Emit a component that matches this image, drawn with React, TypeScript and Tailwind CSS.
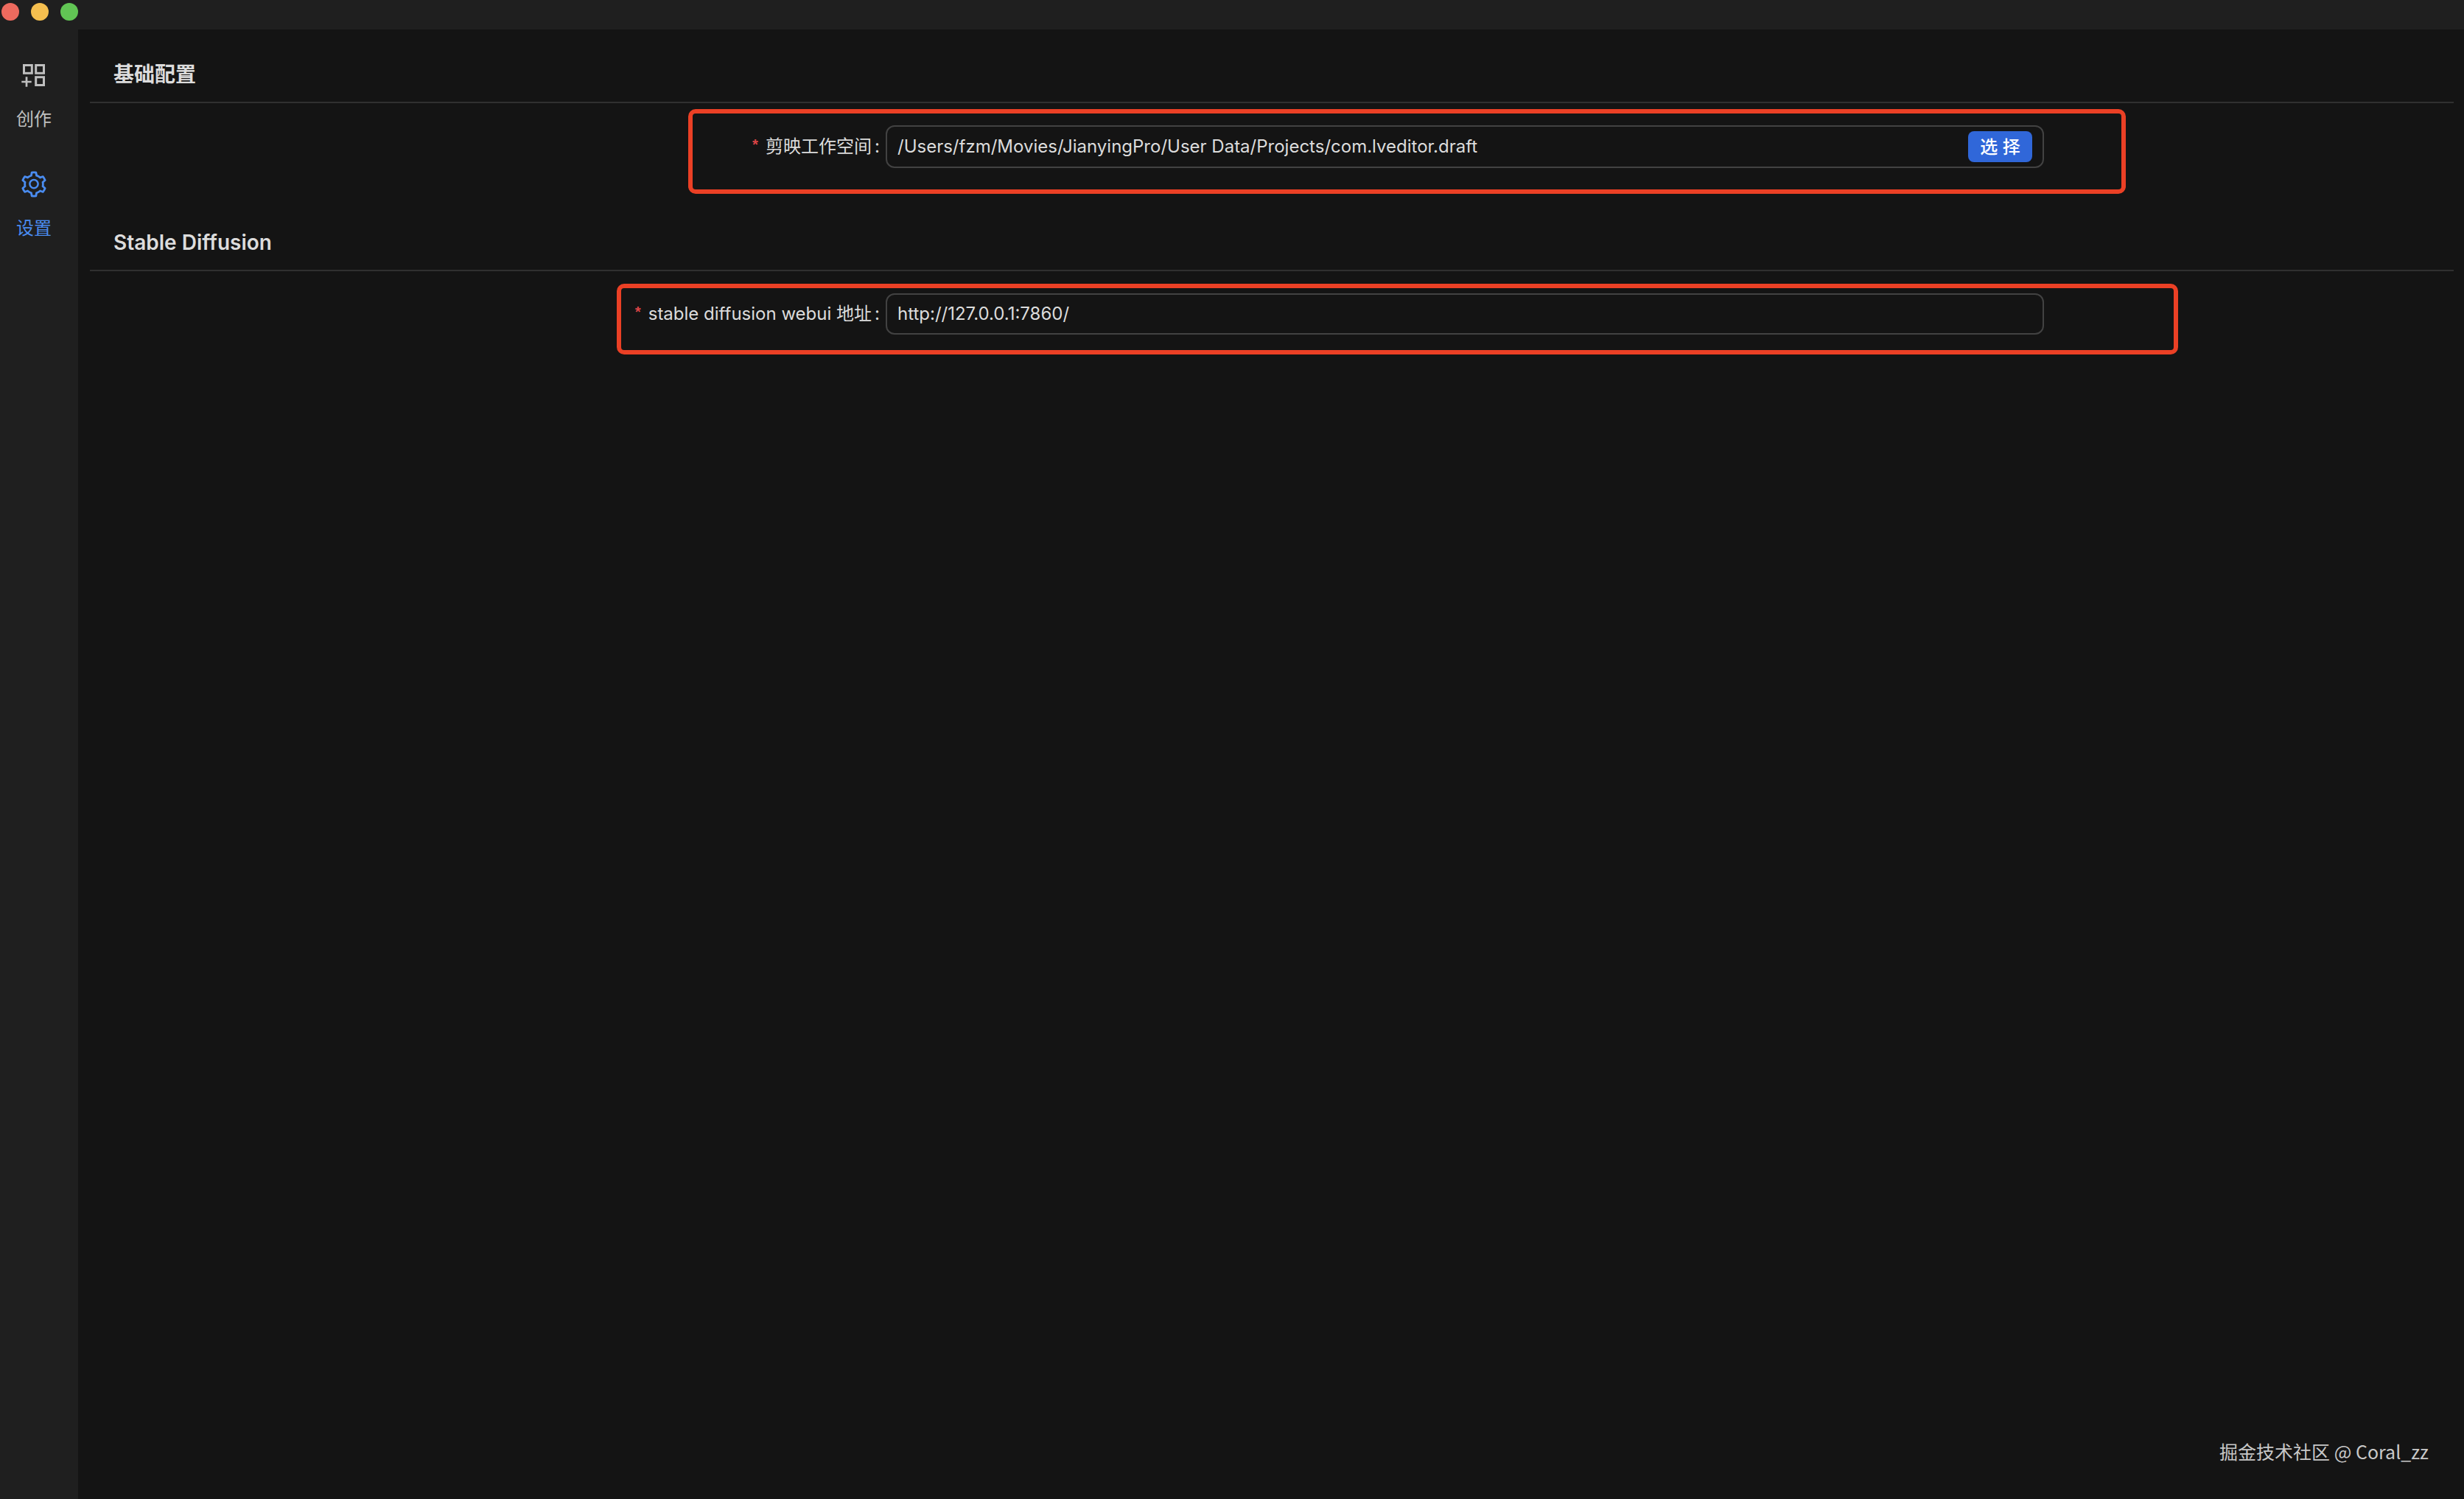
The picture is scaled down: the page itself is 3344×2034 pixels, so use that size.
import React, { useState } from "react";
import { AiOutlineSetting } from "react-icons/ai";

function CreateIcon() {
  return (
    <svg
      viewBox="0 0 40 40"
      className="h-10 w-10"
      fill="none"
      stroke="currentColor"
      strokeWidth="3"
      aria-hidden="true"
    >
      <rect x="6.5" y="6.5" width="10.8" height="10.8" />
      <rect x="22.7" y="6.5" width="10.8" height="10.8" />
      <rect x="22.7" y="22.7" width="10.8" height="10.8" />
      <path d="M10 22.3v13.4M3.3 29h13.4" strokeWidth="2.7" />
    </svg>
  );
}

function Sidebar() {
  return (
    <nav className="w-[106px] shrink-0 bg-[#1f1f1f] pt-[42px] pr-[14px]">
      <a
        href="#create"
        className="flex flex-col items-center gap-[22px] pb-[50px] text-[#bfbfbf]"
      >
        <CreateIcon />
        <span className="leading-9">创作</span>
      </a>
      <a
        href="#settings"
        className="flex flex-col items-center gap-[22px] pb-[50px] text-[#4a8cf0]"
      >
        <AiOutlineSetting className="h-10 w-10" />
        <span className="leading-9">设置</span>
      </a>
    </nav>
  );
}

function Section({ title, children }) {
  return (
    <section className="pb-16">
      <h2 className="flex h-[76px] items-center border-b-2 border-[#303030] px-8 text-[28px] font-semibold">
        {title}
      </h2>
      <div className="px-8 pt-[30px]">{children}</div>
    </section>
  );
}

function FieldLabel({ htmlFor, children }) {
  return (
    <label
      htmlFor={htmlFor}
      className="flex w-1/3 items-center justify-end pr-2 whitespace-nowrap"
    >
      <span className="mr-2 font-['Liberation_Mono',monospace] text-xl font-bold text-[#dc4446]">
        *
      </span>
      {children}
      <span className="ml-1">:</span>
    </label>
  );
}

export default function SettingsPage() {
  const [workspace, setWorkspace] = useState(
    "/Users/fzm/Movies/JianyingPro/User Data/Projects/com.lveditor.draft"
  );
  const [webuiUrl, setWebuiUrl] = useState("http://127.0.0.1:7860/");

  return (
    <div className="flex min-h-screen flex-col bg-[#141414] font-['Inter','Noto_Sans_CJK_SC',sans-serif] text-[24px] text-[#dcdcdc]">
      <header className="flex h-10 gap-4 bg-[#1f1f1f] pt-1 pl-[2px]">
        <span className="h-6 w-6 rounded-full bg-[#ed6a5e]" />
        <span className="h-6 w-6 rounded-full bg-[#f5bf4f]" />
        <span className="h-6 w-6 rounded-full bg-[#61c554]" />
      </header>
      <div className="flex flex-1">
        <Sidebar />
        <main className="flex flex-1 flex-col pt-6 pr-[14px] pl-4">
          <Section title="基础配置">
            <div className="flex">
              <FieldLabel htmlFor="workspace">剪映工作空间</FieldLabel>
              <div className="relative flex h-[58px] w-1/2 items-center rounded-xl border-2 border-[#424242] px-[14px]">
                <input
                  id="workspace"
                  className="min-w-0 flex-1 bg-transparent outline-none"
                  value={workspace}
                  onChange={(e) => setWorkspace(e.target.value)}
                />
                <button
                  type="button"
                  className="flex h-[42px] w-[87px] items-center justify-center rounded-lg bg-[#3067d9] pt-[2px] font-medium text-white"
                >
                  选 择
                </button>
                <div className="pointer-events-none absolute -top-6 -right-[113px] -bottom-[37px] -left-[270px] rounded-[10px] border-6 border-[#eb4025]" />
              </div>
            </div>
          </Section>
          <Section title="Stable Diffusion">
            <div className="flex">
              <FieldLabel htmlFor="webui">stable diffusion webui 地址</FieldLabel>
              <div className="relative flex h-14 w-1/2 items-center rounded-xl border-2 border-[#424242] px-[14px]">
                <input
                  id="webui"
                  className="min-w-0 flex-1 bg-transparent outline-none"
                  value={webuiUrl}
                  onChange={(e) => setWebuiUrl(e.target.value)}
                />
                <div className="pointer-events-none absolute -top-[15px] -right-[184px] -bottom-[29px] -left-[367px] rounded-[10px] border-6 border-[#eb4025]" />
              </div>
            </div>
          </Section>
          <footer className="mt-auto pr-[34px] pb-[46px] text-right font-['Noto_Sans_CJK_SC',sans-serif] text-[25px] text-[#c8c8c8]">
            掘金技术社区 @ Coral_zz
          </footer>
        </main>
      </div>
    </div>
  );
}
